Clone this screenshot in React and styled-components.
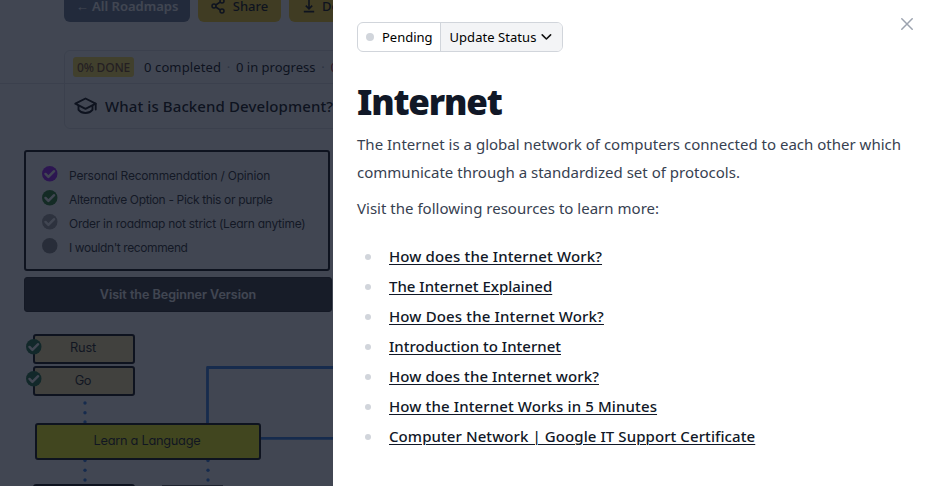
import React from "react";
import styled, { createGlobalStyle } from "styled-components";

const sans = `"Noto Sans", "Open Sans", sans-serif`;
const sketch = `Inter, "Noto Sans", sans-serif`;

const GlobalStyle = createGlobalStyle`
  *, *::before, *::after { box-sizing: border-box; }
  html, body { margin: 0; padding: 0; overflow: hidden; background: #fff; }
  body { font-family: ${sans}; color: #000; }
  h1, p, ul { margin: 0; padding: 0; }
  button { font: inherit; color: inherit; border: 0; background: none; padding: 0; cursor: pointer; }
`;

const Screen = styled.div`
  position: relative;
  width: 928px;
  height: 486px;
  overflow: hidden;
`;

const Text = styled.span`
  letter-spacing: ${(p) => p.$track || 0}px;
  white-space: nowrap;
`;

/* ---------- Roadmap page ---------- */

const Page = styled.main`
  display: flex;
  flex-direction: column;
  width: 928px;
  height: 486px;
  overflow: hidden;
`;

const Header = styled.header`
  flex: none;
  height: 84px;
  padding: 0 64px;
  border-bottom: 1px solid #e0e2e6;
`;

const Actions = styled.div`
  display: flex;
  gap: 8px;
  margin-top: -10px;
`;

const ActionButton = styled.button`
  display: flex;
  align-items: center;
  justify-content: center;
  gap: ${(p) => p.$gap || 0}px;
  width: ${(p) => p.$width}px;
  height: 32px;
  border-radius: 6px;
  background: ${(p) => (p.$muted ? "#64748b" : "#facc15")};
  color: ${(p) => (p.$muted ? "#fff" : "#000")};
  font-size: 13px;
  font-weight: ${(p) => (p.$muted ? 600 : 500)};
  line-height: 20px;
`;

const ProgressCard = styled.section`
  flex: none;
  width: 800px;
  height: 79px;
  margin: -34px 0 0 64px;
  border: 1px solid #e0e2e6;
  border-radius: 6px;
  background: #fff;
`;

const ProgressRow = styled.div`
  display: flex;
  align-items: center;
  height: 33px;
  padding-left: 8px;
  border-bottom: 1px solid #e0e2e6;
  font-size: 13px;
`;

const Badge = styled.span`
  display: flex;
  align-items: center;
  justify-content: center;
  width: 61px;
  height: 20px;
  margin-right: 10px;
  border-radius: 3px;
  background: #fde047;
  color: #713f12;
  font-size: 12px;
  font-weight: 500;
`;

const Dot = styled.span`
  width: 15px;
  color: #9ca3af;
  text-align: center;
`;

const Count = styled(Text)`
  color: ${(p) => p.$color || "#000"};
`;

const Question = styled.div`
  display: flex;
  align-items: center;
  gap: 8px;
  height: 43px;
  padding-left: 9px;
  font-size: 15px;
  font-weight: 500;
`;

const Canvas = styled.section`
  position: relative;
  flex: 1;
`;

const Legend = styled.div`
  display: flex;
  flex-direction: column;
  gap: 9px;
  width: 306px;
  height: 121px;
  margin: 21px 0 0 24px;
  padding: 14px 0 0 16px;
  border: 2px solid #000;
  border-radius: 3px;
`;

const LegendItem = styled.div`
  display: grid;
  grid-template-columns: 15px 1fr;
  column-gap: 12px;
  height: 15px;
  font: 400 12px/19px ${sketch};
  font-feature-settings: "cv11";
  color: #222;

  svg { display: block; }
`;

const BeginnerLink = styled.div`
  width: 308px;
  height: 35px;
  margin: 6px 0 0 24px;
  border: 1px solid #222;
  border-radius: 3px;
  background: #2f2f2f;
  color: #fff;
  text-align: center;
  font: 600 12.5px/33px ${sketch};
  font-feature-settings: "cv11";
`;

const Links = styled.svg`
  position: absolute;
  left: 0;
  top: 0;
  display: block;
`;

const Node = styled.div`
  position: absolute;
  left: ${(p) => p.$x}px;
  top: ${(p) => p.$y}px;
  width: ${(p) => p.$w}px;
  height: ${(p) => p.$h}px;
  display: flex;
  align-items: center;
  justify-content: center;
  padding-right: 2px;
  border: 2px solid #000;
  border-radius: 3px;
  background: ${(p) => p.$fill};
  color: #111;
  font: 400 12.8px/1 ${sketch};
  font-feature-settings: "cv11";
`;

const NodeMark = styled.span`
  position: absolute;
  left: -9px;
  top: 3px;

  svg { display: block; }
`;

const Backdrop = styled.div`
  position: absolute;
  inset: 0;
  background: rgba(17, 24, 39, 0.8);
`;

/* ---------- Topic drawer ---------- */

const Drawer = styled.aside`
  position: absolute;
  top: 0;
  right: 0;
  bottom: 0;
  width: 595px;
  padding: 22px 24px;
  background: #fff;
`;

const TopBar = styled.div`
  display: flex;
  justify-content: space-between;
  height: 30px;
`;

const StatusGroup = styled.div`
  display: flex;
  width: 206px;
  border: 1px solid #d1d5db;
  border-radius: 6px;
  overflow: hidden;
  font-size: 13px;
  line-height: 28px;
`;

const CurrentStatus = styled.span`
  display: flex;
  align-items: center;
  gap: 8px;
  width: 83px;
  padding-left: 8px;
  border-right: 1px solid #d1d5db;

  &::before {
    content: "";
    width: 8px;
    height: 8px;
    border-radius: 50%;
    background: #d1d5db;
  }
`;

const UpdateButton = styled.button`
  display: flex;
  flex: 1;
  align-items: center;
  gap: 5px;
  padding-left: 8.5px;
  background: #f3f4f6;
`;

const CloseButton = styled.button`
  display: flex;
  width: 12px;
  height: 12px;
  margin: -4px -9px 0 0;
`;

const Title = styled.h1`
  margin-top: 30px;
  color: #111827;
  font-size: 35px;
  font-weight: 900;
  line-height: 40px;
  letter-spacing: -1.2px;
`;

const Paragraph = styled.p`
  margin-top: ${(p) => p.$gap}px;
  color: #374151;
  font-size: 15px;
  line-height: 28px;
`;

const Resources = styled.ul`
  display: flex;
  flex-direction: column;
  gap: 2px;
  margin-top: 20px;
  list-style: none;
`;

const Resource = styled.li`
  display: flex;
  align-items: center;
  gap: 18px;
  height: 28px;
  padding-left: 8px;
  line-height: 28px;

  &::before {
    content: "";
    width: 6px;
    height: 6px;
    margin-top: 2px;
    border-radius: 50%;
    background: #d1d5db;
  }
`;

const ResourceLink = styled.a`
  color: #111827;
  font-size: 15px;
  font-weight: 500;
  letter-spacing: ${(p) => p.$track}px;
  text-decoration: underline;
  text-decoration-thickness: 1px;
  text-underline-offset: 2px;
`;

/* ---------- Icons ---------- */

const CheckDisc = ({ fill, empty }) => (
  <svg width="15.5" height="15.5" viewBox="0 0 16 16" overflow="visible">
    <circle cx="8" cy="8" r="8" fill={fill} />
    {!empty && (
      <path d="M3.6 8.2l3 3 5.9-5.8" fill="none" stroke="#fff" strokeWidth="2.5" strokeLinecap="round" strokeLinejoin="round" />
    )}
  </svg>
);

const ShareIcon = () => (
  <svg width="14" height="16" viewBox="0 0 14 16" fill="none" stroke="#000" strokeWidth="1.5">
    <circle cx="11" cy="3" r="2" />
    <circle cx="3" cy="8" r="2" />
    <circle cx="11" cy="13" r="2" />
    <path d="M4.7 7l4.6-3M4.7 9l4.6 3" />
  </svg>
);

const DownloadIcon = () => (
  <svg width="12" height="14" viewBox="0 0 12 14" fill="none" stroke="#000" strokeWidth="1.6">
    <path d="M6 1v8.500M2.800 6.600L6 9.800l3.200-3.200M.8 12.600h10.400" />
  </svg>
);

const CapIcon = () => (
  <svg width="23" height="18" viewBox="0 0 23 18" fill="none" stroke="#000" strokeWidth="1.9" strokeLinejoin="round" strokeLinecap="round">
    <path d="M11.500 1.500L1.300 6.700l10.200 5.100 10.200-5.100z" />
    <path d="M4.500 8.600v4.200c1.800 2.200 4.300 3.200 7 3.200s5.200-1 7-3.200V8.600M21.700 6.700v5.800" />
  </svg>
);

const ChevronIcon = () => (
  <svg width="11" height="8" viewBox="0 0 11 8" fill="none" stroke="#111" strokeWidth="1.6" strokeLinecap="round" strokeLinejoin="round">
    <path d="M1.200 1.900l4.200 4.100 4.200-4.100" />
  </svg>
);

const CloseIcon = () => (
  <svg width="12" height="12" viewBox="0 0 12 12" fill="none" stroke="#9ca3af" strokeWidth="1.5" strokeLinecap="round">
    <path d="M.8.8l10.400 10.400M11.200.8L.8 11.200" />
  </svg>
);

/* ---------- Data ---------- */

const legend = [
  { label: "Personal Recommendation / Opinion", fill: "#9810fa", track: -0.2 },
  { label: "Alternative Option - Pick this or purple", fill: "#227a22", track: -0.35 },
  { label: "Order in roadmap not strict (Learn anytime)", fill: "#999", track: -0.27 },
  { label: "I wouldn't recommend", fill: "#848484", track: -0.4, empty: true },
];

const nodes = [
  { label: "Rust", x: 33, y: 22, w: 102, h: 29.5, fill: "#ffe599", track: -0.2, mark: true },
  { label: "Go", x: 33, y: 54, w: 101.5, h: 30, fill: "#ffe599", track: -0.5, mark: true },
  { label: "Learn a Language", x: 35, y: 111, w: 226, h: 37, fill: "#ffff00", track: -0.28 },
  { label: "", x: 33, y: 172, w: 101.5, h: 30, fill: "#ffe599" },
];

const resources = [
  ["How does the Internet Work?", 0.13],
  ["The Internet Explained", 0],
  ["How Does the Internet Work?", 0.14],
  ["Introduction to Internet", 0],
  ["How does the Internet work?", 0.08],
  ["How the Internet Works in 5 Minutes", 0.12],
  ["Computer Network | Google IT Support Certificate", 0.08],
];

const dots = [
  [85, 91], [85, 100.7], [85, 110],
  [85, 148.5], [85, 158.3], [85, 168],
  [208, 148.5], [208, 158.3], [208, 168],
];

export default function App() {
  return (
    <Screen>
      <GlobalStyle />
      <Page>
        <Header>
          <Actions>
            <ActionButton $muted $width={126}><Text>← All Roadmaps</Text></ActionButton>
            <ActionButton $width={83} $gap={8}><ShareIcon /><Text>Share</Text></ActionButton>
            <ActionButton $width={110} $gap={7}><DownloadIcon /><Text>Download</Text></ActionButton>
          </Actions>
        </Header>
        <ProgressCard>
          <ProgressRow>
            <Badge><Text $track={-0.2}>0% DONE</Text></Badge>
            <Count $track={0.11}>0 completed</Count>
            <Dot>·</Dot>
            <Count>0 in progress</Count>
            <Dot>·</Dot>
            <Count $color="#b91c1c">0 skipped</Count>
          </ProgressRow>
          <Question>
            <CapIcon />
            <Text $track={0.1}>What is Backend Development?</Text>
          </Question>
        </ProgressCard>
        <Legend>
          {legend.map((item) => (
            <LegendItem key={item.label}>
              <CheckDisc fill={item.fill} empty={item.empty} />
              <Text $track={item.track}>{item.label}</Text>
            </LegendItem>
          ))}
        </Legend>
        <BeginnerLink><Text>Visit the Beginner Version</Text></BeginnerLink>
        <Canvas>
          <Links width="928" height="174" viewBox="0 0 928 174">
            <path d="M207.500 112V55.500H400M260 126.300H400" fill="none" stroke="#2b78e4" strokeWidth="2.8" strokeLinejoin="round" />
            {dots.map(([x, y]) => <circle key={`${x}-${y}`} cx={x} cy={y} r="1.700" fill="#2b78e4" />)}
            <path d="M162 173.500h61" stroke="#555" strokeWidth="1" />
          </Links>
          {nodes.map((n, i) => (
            <Node key={i} $x={n.x} $y={n.y} $w={n.w} $h={n.h} $fill={n.fill}>
              <Text $track={n.track}>{n.label}</Text>
              {n.mark && <NodeMark><CheckDisc fill="#156b38" /></NodeMark>}
            </Node>
          ))}
        </Canvas>
      </Page>
      <Backdrop />
      <Drawer>
        <TopBar>
          <StatusGroup>
            <CurrentStatus>Pending</CurrentStatus>
            <UpdateButton><Text $track={0.05}>Update Status</Text><ChevronIcon /></UpdateButton>
          </StatusGroup>
          <CloseButton aria-label="Close"><CloseIcon /></CloseButton>
        </TopBar>
        <Title>Internet</Title>
        <Paragraph $gap={8}>
          <Text $track={0.01}>The Internet is a global network of computers connected to each other which</Text>
          <br />
          <Text $track={0.01}>communicate through a standardized set of protocols.</Text>
        </Paragraph>
        <Paragraph $gap={8}><Text $track={0.01}>Visit the following resources to learn more:</Text></Paragraph>
        <Resources>
          {resources.map(([label, track]) => (
            <Resource key={label}><ResourceLink href="#" $track={track}>{label}</ResourceLink></Resource>
          ))}
        </Resources>
      </Drawer>
    </Screen>
  );
}
